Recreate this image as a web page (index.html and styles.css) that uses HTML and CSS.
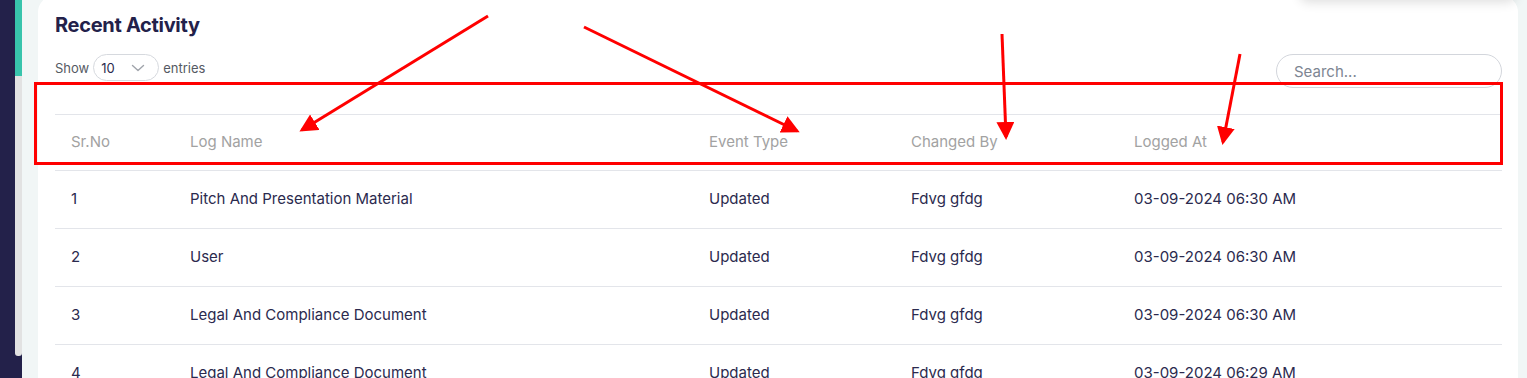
FILE: index.html
```html
<!DOCTYPE html>
<html>
<head>
<meta charset="utf-8">
<link rel="stylesheet" href="styles.css">
</head>
<body>
<div class="page">
  <aside class="sidebar">
    <div class="scroll">
      <div class="thumb"></div>
      <div class="track"></div>
    </div>
  </aside>
  <main class="main">
    <section class="card">
      <h2 class="title">Recent Activity</h2>
      <div class="controls">
        <div class="length">
          <span>Show</span>
          <div class="select">
            <span>10</span>
            <svg class="chev" width="14" height="8" viewBox="0 0 14 8"><path d="M1.5 1.5 L7 6.5 L12.5 1.5" fill="none" stroke="#a0a4ab" stroke-width="1.4" stroke-linecap="round" stroke-linejoin="round"/></svg>
          </div>
          <span>entries</span>
        </div>
        <div class="search">Search...</div>
      </div>
      <table class="table">
        <colgroup>
          <col class="c1"><col class="c2"><col class="c3"><col class="c4"><col class="c5">
        </colgroup>
        <thead>
          <tr><th>Sr.No</th><th>Log Name</th><th>Event Type</th><th>Changed By</th><th>Logged At</th></tr>
        </thead>
        <tbody>
          <tr><td>1</td><td>Pitch And Presentation Material</td><td>Updated</td><td>Fdvg gfdg</td><td>03-09-2024 06:30 AM</td></tr>
          <tr><td>2</td><td>User</td><td>Updated</td><td>Fdvg gfdg</td><td>03-09-2024 06:30 AM</td></tr>
          <tr><td>3</td><td>Legal And Compliance Document</td><td>Updated</td><td>Fdvg gfdg</td><td>03-09-2024 06:30 AM</td></tr>
          <tr><td>4</td><td>Legal And Compliance Document</td><td>Updated</td><td>Fdvg gfdg</td><td>03-09-2024 06:29 AM</td></tr>
        </tbody>
      </table>
    </section>
  </main>
</div>
<div class="dropdown-shadow"></div>
<svg class="annot" width="1527" height="378" viewBox="0 0 1527 378">
  <defs>
    <marker id="ah" markerWidth="6" markerHeight="6" refX="5" refY="3" orient="auto" markerUnits="strokeWidth">
      <path d="M0 0 L6 3 L0 6 Z" fill="#f00"/>
    </marker>
  </defs>
  <rect x="35.5" y="83.5" width="1466" height="80" fill="none" stroke="#f00" stroke-width="3"/>
  <line x1="488" y1="16" x2="302" y2="130" stroke="#f00" stroke-width="3" marker-end="url(#ah)"/>
  <line x1="584" y1="27" x2="797" y2="131" stroke="#f00" stroke-width="3" marker-end="url(#ah)"/>
  <line x1="1002" y1="34" x2="1006" y2="137" stroke="#f00" stroke-width="3" marker-end="url(#ah)"/>
  <line x1="1240" y1="54" x2="1223" y2="142" stroke="#f00" stroke-width="3" marker-end="url(#ah)"/>
</svg>
</body>
</html>
```

FILE: styles.css
```css
* { box-sizing: border-box; }
html, body { margin: 0; padding: 0; }
body {
  width: 1527px;
  height: 378px;
  overflow: hidden;
  font-family: Inter, "Noto Sans", sans-serif;
  color: #2b2a4e;
  position: relative;
}
.page {
  display: flex;
  height: 378px;
  overflow: hidden;
}
.sidebar {
  width: 22px;
  background: #23214a;
  display: flex;
  justify-content: flex-end;
  flex-shrink: 0;
}
.scroll {
  width: 7px;
  display: flex;
  flex-direction: column;
}
.thumb {
  height: 76px;
  background: #38c4ac;
}
.track {
  height: 280px;
  background: #e2e2e2;
  border-radius: 0 0 3px 3px;
}
.main {
  flex: 1;
  background: #f1f6f6;
  padding: 0 9px 0 16px;
}
.card {
  background: #fff;
  margin-top: -4px;
  height: 440px;
  border-radius: 16px;
  padding: 16px 16px 0 17px;
}
.title {
  margin: 0;
  font-size: 20px;
  line-height: 26px;
  font-weight: 700;
  color: #23214a;
  letter-spacing: -0.3px;
}
.controls {
  display: flex;
  justify-content: space-between;
  align-items: flex-start;
  margin-top: 16px;
}
.length {
  display: flex;
  align-items: center;
  gap: 4px;
  font-size: 13px;
  color: #555a63;
}
.select {
  width: 66px;
  height: 27px;
  border: 1px solid #d6d9de;
  border-radius: 14px;
  display: flex;
  align-items: center;
  justify-content: space-between;
  padding: 0 13px 0 7px;
  font-size: 13px;
  color: #2b2a4e;
}
.chev { display: block; }
.search {
  width: 226px;
  height: 34px;
  border: 1px solid #d3d6dc;
  border-radius: 17px;
  padding-left: 17px;
  display: flex;
  align-items: center;
  font-size: 15px;
  color: #7d8592;
}
.table {
  margin-top: 26px;
  width: 1447px;
  border-collapse: collapse;
  table-layout: fixed;
  font-size: 15px;
}
.c1 { width: 119px; }
.c2 { width: 519px; }
.c3 { width: 202px; }
.c4 { width: 223px; }
.table th {
  text-align: left;
  font-weight: 400;
  color: #a2a2a2;
  height: 56px;
  padding: 0 16px 2px;
  border-top: 1px solid #e3e5ea;
  border-bottom: 1px solid #e3e5ea;
}
.table td {
  height: 58px;
  padding: 0 16px 2px;
  border-bottom: 1px solid #e3e5ea;
  color: #2b2a4e;
}
.dropdown-shadow {
  position: absolute;
  left: 1300px;
  top: -40px;
  width: 216px;
  height: 40px;
  background: #fff;
  box-shadow: 0 2px 12px rgba(0,0,0,0.14);
  border-radius: 8px;
}
.annot {
  position: absolute;
  left: 0;
  top: 0;
  pointer-events: none;
}
```
